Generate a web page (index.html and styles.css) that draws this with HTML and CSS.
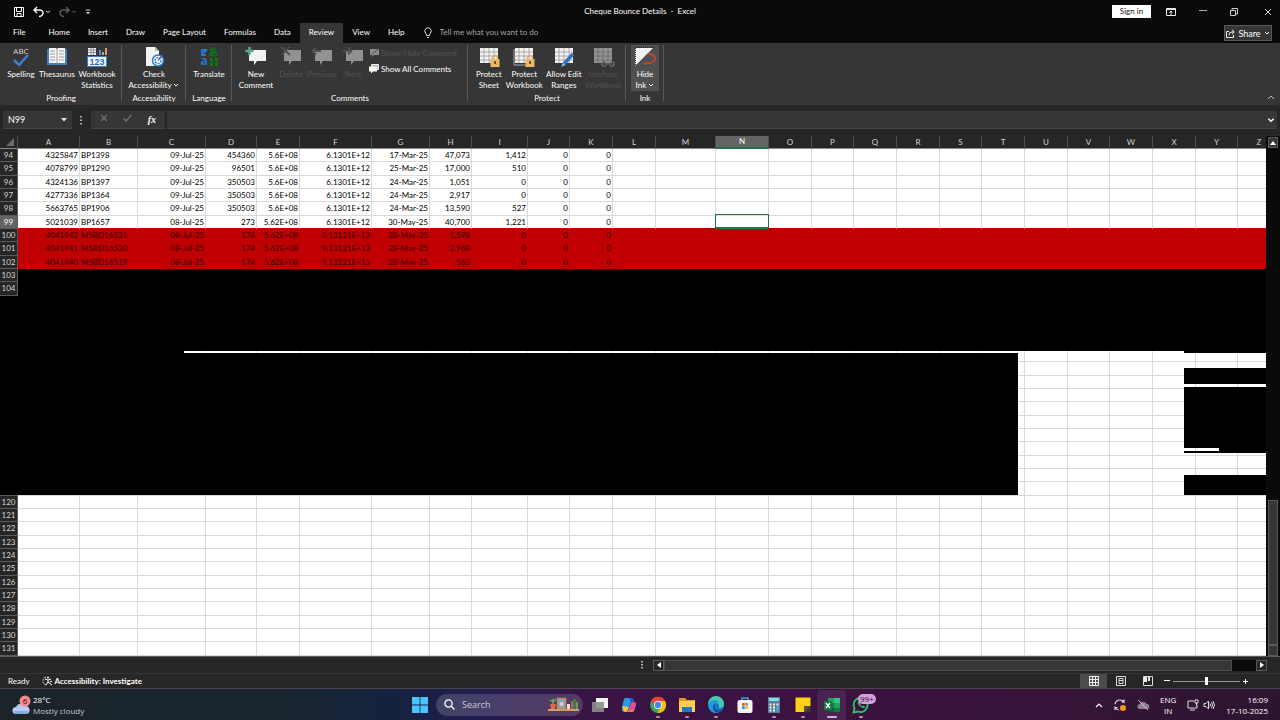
FILE: index.html
```html
<!DOCTYPE html>
<html lang="en">
<head>
    <meta charset="UTF-8">
    <title>Cheque Bounce Details - Excel</title>
    <link rel="stylesheet" href="styles.css">
</head>
<body>
<svg class="defs" width="0" height="0">
    <symbol id="chev" viewBox="0 0 6 6"><path d="M1 2l2 2 2-2" fill="none" stroke="currentColor"/></symbol>
    <symbol id="bubble" viewBox="0 0 22 22"><path d="M4 4h17v11h-9l-3 4v-4H4z" fill="currentColor"/></symbol>
    <symbol id="sheet" viewBox="0 0 22 22">
        <path d="M2 2h18v15H2z" fill="#f2f2f2"/>
        <path d="M2 6h18M2 10h18M2 14h18M6 2v15M11 2v15M16 2v15" stroke="#9a9a9a" stroke-width=".8"/>
    </symbol>
    <symbol id="lock" viewBox="0 0 22 22">
        <path d="M14.500 14v-2a2.500 2.500 0 0 1 5 0v2" fill="none" stroke="#e0b060" stroke-width="1.500"/>
        <path d="M12.500 13h9v8h-9z" fill="#e8b866"/><path d="M17 15v3" stroke="#4a3510" stroke-width="1.500"/>
    </symbol>
</svg>

<header class="titleBar">
    <div class="quick">
        <button aria-label="Save"><svg width="10" height="10" viewBox="0 0 10 10"><path d="M.5.5h9v9h-9zM2.500.5v4h5v-4M3 9.500v-3h4v3" fill="none" stroke="#fff"/></svg></button>
        <button aria-label="Undo"><svg width="17" height="12" viewBox="0 0 17 12"><path d="M4 1L1 4l3 3M1 4h5q4 0 4 3t-4 3.500" fill="none" stroke="#fff" stroke-width="1.400"/><path d="M13 5l2 1.500L17 5" fill="none" stroke="#ddd"/></svg></button>
        <button aria-label="Redo"><svg width="17" height="12" viewBox="0 0 17 12"><path d="M7 1l3 3-3 3M10 4H5Q1 4 1 7t4 3.500" fill="none" stroke="#5c5c5c" stroke-width="1.400"/><path d="M13 5l2 1.500L17 5" fill="none" stroke="#5c5c5c"/></svg></button>
        <button aria-label="Customize"><svg width="6" height="8" viewBox="0 0 6 8"><path d="M1 2h4" stroke="#ccc"/><path d="M1 4h4L3 6.500z" fill="#ccc"/></svg></button>
    </div>
    <div class="docName">Cheque Bounce Details&nbsp; -&nbsp; Excel</div>
    <div class="winBtns">
        <button class="signIn">Sign in</button>
        <button aria-label="Ribbon display"><svg width="10" height="8" viewBox="0 0 10 8"><path d="M.5.5h9v7h-9zM0 1.500h10M5 7V3M3.500 4.500L5 3l1.500 1.500" fill="none" stroke="#eee"/></svg></button>
        <button aria-label="Minimize"><svg width="8" height="8" viewBox="0 0 8 8"><path d="M0 2.500h8" stroke="#aaa"/></svg></button>
        <button aria-label="Restore"><svg width="8" height="8" viewBox="0 0 8 8"><path d="M.5 2.500h5v5h-5zM2 2V.5h5.500V6H6" fill="none" stroke="#ccc"/></svg></button>
        <button aria-label="Close"><svg width="8" height="8" viewBox="0 0 8 8"><path d="M1 1l6 6M7 1L1 7" stroke="#ddd"/></svg></button>
    </div>
</header>

<nav class="tabs">
    <button>File</button>
    <button>Home</button>
    <button>Insert</button>
    <button>Draw</button>
    <button>Page Layout</button>
    <button>Formulas</button>
    <button>Data</button>
    <button class="active">Review</button>
    <button>View</button>
    <button>Help</button>
    <label class="tellMe">
        <svg width="8" height="12" viewBox="0 0 8 12"><path d="M2.500 8.500Q2.500 7 1.500 6A3.200 3.200 0 1 1 6.500 6Q5.500 7 5.500 8.500zM3 10.500h2" fill="none" stroke="#ddd"/></svg>
        <input type="text" placeholder="Tell me what you want to do">
    </label>
    <button class="share"><svg width="9" height="9" viewBox="0 0 9 9"><path d="M3 2.500H.5v6h7V6M3 6q0-3 3-3h2M6 .8L8.300 3 6 5.200" fill="none" stroke="#eee"/></svg>Share<svg width="6" height="6"><use href="#chev"/></svg></button>
</nav>

<div class="ribbon">
    <section class="group proofing">
        <div class="tools">
            <button class="tool w34"><svg width="22" height="22" viewBox="0 0 22 22"><text x="11" y="8" class="abc">ABC</text><path d="M4 14l5 5 9-10" fill="none" stroke="#3e7fd0" stroke-width="2.500"/></svg>Spelling</button>
            <button class="tool w36"><svg width="22" height="22" viewBox="0 0 22 22"><path d="M1 3h20v16H1z" fill="#3d7fc4"/><path d="M3 2h7l1 1 1-1h7v15H3z" fill="#f4f4f4"/><path d="M11 3v15M4 5h5M4 8h5M4 11h5M4 14h5M13 5h5M13 8h5M13 11h5M13 14h5" stroke="#8a8a8a" stroke-width=".8"/></svg>Thesaurus</button>
            <button class="tool w42"><svg width="22" height="22" viewBox="0 0 22 22"><path d="M2 2h8v7H2z" fill="#eee"/><path d="M2 4h8M2 6.500h8M5 2v7M7.500 2v7" stroke="#777" stroke-width=".7"/><path d="M14 4v5" stroke="#4d8fe0" stroke-width="2"/><path d="M17 6v3M20 2v7" stroke="#d0a070" stroke-width="2"/><path d="M1.500 10.500h19v10h-19z" fill="#f4f8ff" stroke="#3d7fc4"/><text x="11" y="19" class="num">123</text></svg>Workbook<br>Statistics</button>
        </div>
        <h2>Proofing</h2>
    </section>
    <section class="group access">
        <div class="tools">
            <button class="tool w56"><svg width="22" height="22" viewBox="0 0 22 22"><path d="M3 1h9l4 4v15H3z" fill="#f2f2f2"/><path d="M12 1v4h4" fill="#bbb"/><circle cx="15" cy="14.500" r="5.500" fill="#fff" stroke="#3378c5" stroke-width="1.500"/><circle cx="15" cy="14.500" r="3" fill="none" stroke="#3378c5" stroke-width="1.500" stroke-dasharray="2 1"/><path d="M15 14.500l4-5" stroke="#3378c5" stroke-width="1.500"/></svg>Check<br>Accessibility <svg width="6" height="6"><use href="#chev"/></svg></button>
        </div>
        <h2>Accessibility</h2>
    </section>
    <section class="group lang">
        <div class="tools">
            <button class="tool w36"><svg width="22" height="22" viewBox="0 0 22 22"><path d="M3 4h6M4 3v6h4M4 8l5-4" stroke="#2376c8" stroke-width="2" fill="none"/><text x="6" y="19" class="latin">a</text><text x="15" y="10" class="kana">あ</text><path d="M12 12h3v3h-3zM17 12h3v3h-3zM12 17h3v3h-3zM17 17h3v3h-3z" fill="#0a7a14"/><path d="M12 16h8" stroke="#0a7a14"/></svg>Translate</button>
        </div>
        <h2>Language</h2>
    </section>
    <section class="group comments">
        <div class="tools">
            <button class="tool w42"><svg width="22" height="22" viewBox="0 0 22 22" color="#f2f2f2"><use href="#bubble"/><path d="M4.500 1v8M.5 5h8" stroke="#5fa58c" stroke-width="2.500"/></svg>New<br>Comment</button>
            <button class="tool w28" disabled><svg width="22" height="22" viewBox="0 0 22 22" color="#929292"><use href="#bubble"/><path d="M1 1l9 8M9 1L2 9" stroke="#505050" stroke-width="1.800"/></svg>Delete</button>
            <button class="tool w34" disabled><svg width="22" height="22" viewBox="0 0 22 22" color="#929292"><use href="#bubble"/><path d="M10 5H2M5 1.500L1.500 5 5 8.500" fill="none" stroke="#505050" stroke-width="1.800"/></svg>Previous</button>
            <button class="tool w28" disabled><svg width="22" height="22" viewBox="0 0 22 22" color="#929292"><use href="#bubble"/><path d="M1 5h8M6 1.500L9.500 5 6 8.500" fill="none" stroke="#505050" stroke-width="1.800"/></svg>Next</button>
            <div class="lines">
                <button disabled><svg width="10" height="10" viewBox="0 0 10 10"><path d="M1 1h9v6H5L3 9V7H1z" fill="#8d8d8d"/><path d="M1 8l8-7" stroke="#444"/></svg>Show/Hide Comment</button>
                <button><svg width="10" height="10" viewBox="0 0 10 10"><path d="M2.500.5h7v5h-7z" fill="#bbb" stroke="#eee"/><path d="M0 2.500h8v5H4l-2 2v-2H0z" fill="#f4f4f4"/></svg>Show All Comments</button>
            </div>
        </div>
        <h2>Comments</h2>
    </section>
    <section class="group protect">
        <div class="tools">
            <button class="tool w34"><svg width="22" height="22" viewBox="0 0 22 22"><use href="#sheet"/><use href="#lock"/></svg>Protect<br>Sheet</button>
            <button class="tool w36"><svg width="22" height="22" viewBox="0 0 22 22"><path d="M1 3v16h17" fill="none" stroke="#aaa"/><use href="#sheet"/><use href="#lock"/></svg>Protect<br>Workbook</button>
            <button class="tool w42"><svg width="22" height="22" viewBox="0 0 22 22"><use href="#sheet"/><path d="M20 8L10 19" stroke="#2f73bd" stroke-width="3.500"/><path d="M10 17l-2 4 4-2z" fill="#9dc3ea"/></svg>Allow Edit<br>Ranges</button>
            <button class="tool w36" disabled><svg width="22" height="22" viewBox="0 0 22 22"><g opacity=".5"><use href="#sheet"/></g><path d="M10 18q0-2 2-2h2M18 16h2q2 0 2 2t-2 2h-2M14 20h-2q-2 0-2-2M13 18h6" fill="none" stroke="#6a6a6a" stroke-width="1.500"/></svg>Unshare<br>Workbook</button>
        </div>
        <h2>Protect</h2>
    </section>
    <section class="group ink">
        <div class="tools">
            <button class="tool w28 pressed"><svg width="22" height="22" viewBox="0 0 22 22"><path d="M14 8q7 0 7 4.500 0 5-11 5" fill="none" stroke="#c0472f" stroke-width="1.800"/><path d="M1 2h18L1 20z" fill="#f4f4f4"/><path d="M1 1.500h19M1.500 2v18" stroke="#222" stroke-dasharray="1 1"/></svg>Hide<br>Ink <svg width="6" height="6"><use href="#chev"/></svg></button>
        </div>
        <h2>Ink</h2>
    </section>
    <button class="collapse" aria-label="Collapse ribbon"><svg width="8" height="6" viewBox="0 0 8 6"><path d="M1 5l3-3 3 3" fill="none" stroke="#bbb"/></svg></button>
</div>

<div class="formulaBar">
    <div class="nameBox">
        <input type="text" value="N99" aria-label="Name box">
        <svg width="6" height="4" viewBox="0 0 6 4"><path d="M0 0h6L3 3.500z" fill="#e6e6e6"/></svg>
    </div>
    <svg class="dots" width="2" height="10" viewBox="0 0 2 10"><path d="M1 1v9" stroke="#ddd" stroke-width="1.500" stroke-dasharray="1.500 2"/></svg>
    <div class="fxBtns">
        <button aria-label="Cancel"><svg width="8" height="8" viewBox="0 0 8 8"><path d="M1 1l6 6M7 1L1 7" stroke="#6e6e6e" stroke-width="1.300"/></svg></button>
        <button aria-label="Enter"><svg width="9" height="8" viewBox="0 0 9 8"><path d="M.5 4.500l2.500 2.500 5.500-6" fill="none" stroke="#6e6e6e" stroke-width="1.500"/></svg></button>
        <button class="fx">fx</button>
    </div>
    <div class="formula">
        <input type="text" aria-label="Formula">
        <svg width="8" height="8" viewBox="0 0 6 6"><path d="M1 2l2 2 2-2" fill="none" stroke="#fff"/></svg>
    </div>
</div>

<main class="sheet">
    <div class="cells">
        <table id="grid"></table>
        <!-- blacked out areas -->
        <div class="mask m1"></div>
        <div class="mask m2"></div>
        <div class="mask m3"></div>
        <div class="mask m4"></div>
        <div class="mask m5"></div>
        <div class="mask m6"></div>
        <div class="mask m7"></div>
        <div class="mask m8"></div>
        <div class="mask m9"></div>
        <div class="mask m10"></div>
    </div>
    <div class="vScroll">
        <button aria-label="Scroll up"><svg width="6" height="4" viewBox="0 0 6 4"><path d="M0 4h6L3 0z" fill="#fff"/></svg></button>
        <div class="vThumb"></div>
        <button aria-label="Scroll down"></button>
    </div>
</main>

<div class="hScroll">
    <svg width="2" height="8" viewBox="0 0 2 8"><path d="M1 0v8" stroke="#ddd" stroke-width="1.500" stroke-dasharray="1.500 1.500"/></svg>
    <div class="track">
        <button aria-label="Scroll left"><svg width="4" height="6" viewBox="0 0 4 6"><path d="M4 0v6L0 3z" fill="#fff"/></svg></button>
        <div class="hThumb"></div>
        <button aria-label="Scroll right"><svg width="4" height="6" viewBox="0 0 4 6"><path d="M0 0v6l4-3z" fill="#fff"/></svg></button>
    </div>
</div>

<div class="status">
    <span>Ready</span>
    <svg width="11" height="10" viewBox="0 0 11 10"><path d="M4 1Q1 2 1 5q0 3 3 4" fill="none" stroke="#ddd" stroke-dasharray="2 1"/><path d="M3 3l3 1 3-1M6 4v2L4 9M6 6l4 3M8 6l2-1" fill="none" stroke="#fff"/><circle cx="6" cy="1.500" r="1" fill="#fff"/></svg>
    <b>Accessibility: Investigate</b>
    <div class="views">
        <button class="on" aria-label="Normal"><svg width="10" height="10" viewBox="0 0 10 10"><path d="M.5.5h9v9h-9zM.5 3.500h9M.5 6.500h9M3.500.5v9M6.500.5v9" fill="none" stroke="#eee"/></svg></button>
        <button aria-label="Page layout"><svg width="10" height="10" viewBox="0 0 10 10"><path d="M.5.5h9v9h-9zM3 2.500h4v5H3zM3 4.500h4" fill="none" stroke="#ddd"/></svg></button>
        <button aria-label="Page break"><svg width="10" height="10" viewBox="0 0 10 10"><path d="M.5.5h9v9h-9z" fill="none" stroke="#ddd"/><path d="M1 1h3v5H1zM5 1h2v4H5z" fill="#eee"/></svg></button>
    </div>
    <div class="zoom">
        <button aria-label="Zoom out"><svg width="6" height="6" viewBox="0 0 6 6"><path d="M0 2.500h6" stroke="#fff"/></svg></button>
        <input type="range" aria-label="Zoom" min="0" max="100" value="50">
        <button aria-label="Zoom in"><svg width="5" height="5" viewBox="0 0 5 5"><path d="M0 2.500h5M2.500 0v5" stroke="#fff"/></svg></button>
    </div>
</div>

<footer class="taskbar">
    <div class="weather">
        <svg width="20" height="22" viewBox="0 0 20 22"><path d="M4 20a3.500 3.500 0 0 1 0-7 5 5 0 0 1 9-1 4 4 0 0 1 1 8z" fill="#b5cdf5"/><path d="M2 17h14q0 3-3 3H4q-2 0-2-3z" fill="#86a9e0"/><circle cx="13" cy="7" r="5.500" fill="#f58a8e"/><text x="13" y="10" class="badge">6</text></svg>
        <div>28°C<br><span>Mostly cloudy</span></div>
    </div>
    <div class="apps">
        <button class="app" aria-label="Start"><svg width="16" height="16" viewBox="0 0 16 16"><path d="M0 0h7.600v7.600H0zM8.400 0H16v7.600H8.400zM0 8.400h7.600V16H0zM8.400 8.400H16V16H8.400z" fill="#4cc2ff"/></svg></button>
        <label class="search">
            <svg width="11" height="11" viewBox="0 0 11 11"><circle cx="4.500" cy="4.500" r="3.600" fill="none" stroke="#fff" stroke-width="1.300"/><path d="M7 7l3.500 3.500" stroke="#fff" stroke-width="1.300"/></svg>
            <input type="text" placeholder="Search">
            <svg width="32" height="16" viewBox="0 0 32 16"><path d="M0 12h31v2H0z" fill="#d59c6a"/><path d="M2 7h6l-1 5H3z" fill="#d9694a"/><path d="M5 7V2M5 5L2 3M5 5l3-3" stroke="#5fae5a" stroke-width="1.500"/><path d="M9.500 1.500h8v10h-8z" fill="#7aa6c9" stroke="#c98a55" stroke-width="1.500"/><circle cx="13.500" cy="7" r="2" fill="#eed0b0"/><path d="M19 7h3v5h-3z" fill="#e9e1dc"/><path d="M23 4h2v8h-2z" fill="#c65b4b"/><path d="M25 2h3v10h-3z" fill="#3f7a55"/><path d="M28 5h2v7h-2z" fill="#6d9a68"/></svg>
        </label>
        <button class="app" aria-label="Task view"><svg width="18" height="18" viewBox="0 0 18 18"><path d="M5 2h12v10H5z" fill="#f3f3f3"/><path d="M1 6h12v10H1z" fill="#8d8d8d" opacity=".9"/></svg></button>
        <button class="app" aria-label="Copilot"><svg width="18" height="18" viewBox="0 0 18 18"><path d="M5 2h6q2 0 2.500 2l.5 2h-3L8 14q-.6 2-3 2-4 0-3-4l1.500-7Q4 2 5 2z" fill="#2a9be8"/><path d="M2 10l1.500 4q.5 2 2 2 2 0 2.500-2l.8-3z" fill="#f4c431"/><path d="M13 6q4 0 3 3l-1.500 5q-.6 2-3 2H6q2 0 2.500-2L10.500 8q.5-2 2.500-2z" fill="#d8529a"/><path d="M9 14l5.500 0q-.6 2-3 2H6q2 0 3-2z" fill="#f2803c"/><path d="M11 2q2 0 2.500 2l.5 2h-3L9.500 3z" fill="#2453c9"/></svg></button>
        <button class="app run" aria-label="Chrome"><svg width="18" height="18" viewBox="0 0 18 18"><circle cx="9" cy="9" r="8" fill="#34a853"/><path d="M2 5a8 8 0 0 1 14 0H9L6 11z" fill="#ea4335"/><path d="M16 5a8 8 0 0 1-7.500 12l4-7L9 5z" fill="#fbbc05"/><circle cx="9" cy="9" r="4" fill="#fff"/><circle cx="9" cy="9" r="3.200" fill="#4285f4"/></svg></button>
        <button class="app run" aria-label="File Explorer"><svg width="18" height="18" viewBox="0 0 18 18"><path d="M1 2h6l2 2h8v4H1z" fill="#e09c1f"/><path d="M1 5h16v11H1z" fill="#ffd050"/><path d="M4 11h10v5H4z" fill="#2279c9"/></svg></button>
        <button class="app run" aria-label="Edge"><svg width="18" height="18" viewBox="0 0 18 18"><circle cx="9" cy="9" r="8" fill="#1479cf"/><path d="M1 8a8 8 0 0 1 16 0q0 4-5 4 1-5-4-5-4 0-7 1z" fill="#43cbb0"/><path d="M1 8q2-4 7-4 3 0 4 3Q6 6 6 11q0 4 4 6Q2 17 1 8z" fill="#1b9de0"/><path d="M8 8q-2 5 3 6 3 .5 5-1-3 4-7 3-4-2-3-6 1-2 2-2z" fill="#124d97"/></svg></button>
        <button class="app" aria-label="Store"><svg width="18" height="18" viewBox="0 0 18 18"><path d="M6 5V2h6v3" fill="none" stroke="#3a9be5" stroke-width="1.500"/><rect x="1.500" y="4" width="15" height="13" rx="2" fill="#f5f5f5"/><path d="M6 7h2.700v2.700H6z" fill="#e4572e"/><path d="M9.300 7H12v2.700H9.300z" fill="#76b041"/><path d="M6 10.300h2.700V13H6z" fill="#2d8fe0"/><path d="M9.300 10.300H12V13H9.300z" fill="#f5b921"/></svg></button>
        <button class="app run" aria-label="Calculator"><svg width="18" height="18" viewBox="0 0 18 18"><path d="M3 1h12v16H3z" fill="#5d7c94"/><path d="M4 2h10v3H4z" fill="#7fdcf5"/><path d="M4.500 7.500h2v2h-2zM8 7.500h2v2H8zM4.500 10.500h2v2h-2zM8 10.500h2v2H8zM4.500 13.500h2v2h-2zM8 13.500h2v2H8z" fill="#eee"/><path d="M11.500 7.500h2v2h-2z" fill="#eee"/><path d="M11.500 10.500h2v5h-2z" fill="#3fb3ef"/></svg></button>
        <button class="app run" aria-label="Sticky Notes"><svg width="18" height="18" viewBox="0 0 18 18"><path d="M1.500 1.500h15V10l-6 6h-9z" fill="#fcd116"/><path d="M10 16.500V10h6.500v6.500z" fill="#3b3b35"/><path d="M10 16.500V10h6.500z" fill="#55533f"/></svg></button>
        <button class="app run current" aria-label="Excel"><svg width="18" height="18" viewBox="0 0 18 18"><path d="M5 2h12v14H5z" fill="#21a366"/><path d="M11 2h6v5h-6z" fill="#33c481"/><path d="M5 7h6v5H5zM11 12h6v4h-6z" fill="#107c41"/><path d="M5 12h6v4H5z" fill="#185c37"/><path d="M1 5h8v9H1z" fill="#107c41"/><path d="M3 7l4 5M7 7l-4 5" stroke="#fff" stroke-width="1.300"/></svg></button>
        <button class="app run" aria-label="WhatsApp"><svg width="18" height="18" viewBox="0 0 18 18"><path d="M1.500 16.500l1-4A7 7 0 1 1 6 15.500z" fill="none" stroke="#2bc466" stroke-width="1.800"/><path d="M6 5.500q-1 2 1.500 4.500t5 2l.5-1.500-2-1-1 .8q-1.500-.6-2-2l.7-1-.8-1.800z" fill="#2bc466"/></svg><span class="count">99+</span></button>
    </div>
    <div class="tray">
        <svg width="8" height="6" viewBox="0 0 8 6"><path d="M1 5l3-3 3 3" fill="none" stroke="#fff" stroke-width="1.200"/></svg>
        <svg width="12" height="12" viewBox="0 0 12 12"><path d="M1 5q1-4 5-4 2.500 0 4 2V.5M10 3H7.500M1 11V8.500q1.500 2 4 2.500M1 8.500h2.500" fill="none" stroke="#ddd" stroke-width="1.200"/><circle cx="9" cy="9" r="3" fill="#f7941d"/></svg>
        <svg width="12" height="10" viewBox="0 0 12 10"><path d="M3 9a2.500 2.500 0 0 1 0-5 3.500 3.500 0 0 1 6.500 0A2.500 2.500 0 0 1 10 9z" fill="#8f8093"/><path d="M1 0l10 10" stroke="#c9bccb"/></svg>
        <span class="kb">ENG<br>IN</span>
        <svg class="net" width="12" height="12" viewBox="0 0 12 12"><path d="M7 2H1v7h9V6M3 11h5M8 1h3v3H8zM9.500 4v3" fill="none" stroke="#ddd"/></svg>
        <svg width="12" height="10" viewBox="0 0 12 10"><path d="M1 3.500h2L5.500 1v8L3 6.500H1zM7 3.500q1 1.500 0 3M8.500 2q2 3 0 6M10 1q3 4 0 8" fill="none" stroke="#ddd"/></svg>
        <span class="clock">16:09<br>17-10-2025</span>
    </div>
</footer>
<script src="script.js"></script>
</body>
</html>
```
FILE: styles.css
```css
*{
    padding: 0;
    margin: 0;
    box-sizing: border-box;
}
body{
    min-height: 100vh;
    display: flex;
    flex-direction: column;
    background-color: #262626;
    color: #fff;
    font: 8px/11px Lato, "Noto Sans", sans-serif;
    overflow: hidden;
}
button, input{
    background: none;
    border: none;
    outline: none;
    color: inherit;
    font: inherit;
}
svg{
    flex: none;
    overflow: visible;
}
.defs{
    position: absolute;
}
.titleBar{
    display: grid;
    grid-template-columns: 1fr auto 1fr;
    align-items: center;
    height: 23px;
    background-color: #0a0a0a;
}
.quick, .winBtns, .winBtns button, .quick button{
    display: flex;
    align-items: center;
}
.quick{
    gap: 9px;
    padding-left: 14px;
}
.winBtns{
    justify-content: flex-end;
    gap: 23px;
    padding-right: 8px;
}
.winBtns button:last-child{
    margin-left: 3px;
}
.winBtns .signIn{
    justify-content: center;
    width: 39px;
    height: 13px;
    margin-right: -8px;
    background-color: #fff;
    color: #111;
}
.tabs{
    display: flex;
    height: 20px;
    padding-left: 4px;
    background-color: #0a0a0a;
}
.tabs button{
    padding: 0 9px 2px;
}
.tabs button:first-child{
    margin-right: 5px;
}
.tabs .active{
    background-color: #363636;
}
.tellMe{
    display: flex;
    align-items: center;
    gap: 8px;
    margin-left: 10px;
    padding-bottom: 1px;
}
.tellMe input{
    width: 140px;
}
.tellMe input::placeholder{
    color: #a5a5a5;
}
.tabs .share{
    display: flex;
    align-items: center;
    justify-content: center;
    gap: 3px;
    width: 48px;
    height: 16px;
    margin: 2px 8px 0 auto;
    padding: 0;
    background-color: #363636;
    border: 1px solid #5a5a5a;
    font-size: 9px;
}
.ribbon{
    display: flex;
    height: 62px;
    background-color: #363636;
}
.group{
    position: relative;
    display: flex;
    flex-direction: column;
    justify-content: space-between;
    padding: 2px 4px 1px;
}
.group:after{
    content: "";
    position: absolute;
    right: 0;
    top: 2px;
    bottom: 4px;
    width: 1px;
    background-color: #5a5a5a;
}
.group h2{
    font: inherit;
    text-align: center;
}
.tools{
    display: flex;
    align-items: flex-start;
    justify-content: center;
}
.proofing{
    width: 122px;
}
.access{
    width: 64px;
}
.lang{
    width: 46px;
}
.comments{
    width: 236px;
    padding: 2px 3px 1px;
}
.protect{
    width: 158px;
}
.ink{
    width: 38px;
}
.tool{
    display: block;
    white-space: nowrap;
    text-align: center;
}
.tool > svg:first-child{
    display: block;
    margin: 1px auto;
}
.w28{
    width: 28px;
}
.w34{
    width: 34px;
}
.w36{
    width: 38px;
}
.w42{
    width: 42px;
}
.w56{
    width: 56px;
}
.pressed{
    background-color: #505050;
}
.ribbon button:disabled{
    color: #525252;
}
.lines{
    flex: 1;
    margin-left: 2px;
}
.lines button{
    display: flex;
    align-items: center;
    gap: 2px;
    height: 16px;
    white-space: nowrap;
}
.abc{
    font: 8px "Open Sans", sans-serif;
    fill: #ddd;
    text-anchor: middle;
}
.num{
    font: bold 9px "Liberation Sans", sans-serif;
    fill: #2c6db5;
    text-anchor: middle;
}
.latin{
    font: bold 12px/12px "Open Sans", sans-serif;
    fill: #2376c8;
    text-anchor: middle;
}
.kana{
    font: bold 10px/10px "Noto Sans CJK JP", sans-serif;
    fill: #0a7a14;
    text-anchor: middle;
}
.collapse{
    margin: auto 5px 2px auto;
}
.formulaBar{
    display: flex;
    align-items: center;
    height: 31px;
    padding: 6px 3px 7px;
}
.nameBox, .fxBtns, .formula{
    display: flex;
    align-items: center;
    height: 18px;
    background-color: #363636;
    border-bottom: 1px solid #444;
}
.nameBox{
    width: 69px;
    padding: 0 5px;
    font-size: 9px;
}
.nameBox input{
    flex: 1;
    min-width: 0;
}
.dots{
    margin: 0 9px 0 8px;
}
.fxBtns{
    justify-content: space-between;
    width: 74px;
    padding: 0 9px;
}
.fx{
    font: italic bold 10px "Liberation Serif", serif;
}
.formula{
    flex: 1;
    margin-left: 2px;
    padding-right: 2px;
}
.formula input{
    flex: 1;
}
.sheet{
    display: flex;
}
.cells{
    position: relative;
    flex: 1;
    min-width: 0;
    overflow: hidden;
    background-color: #fff;
}
table{
    table-layout: fixed;
    width: 1281px;
    border-spacing: 0;
    font: 8px/11px Lato, sans-serif;
    color: #000;
}
tr{
    height: 13px;
}
tbody tr:nth-child(3n+2){
    height: 14px;
}
td{
    border-right: 1px solid #d9d9d9;
    border-bottom: 1px solid #d9d9d9;
    padding: 0 1px;
    text-align: right;
    white-space: nowrap;
}
td.left{
    text-align: left;
}
th{
    background-color: #262626;
    border-right: 1px solid #4c4c4c;
    border-bottom: 1px solid #8a8a8a;
    color: #d4d4d4;
    font-weight: normal;
}
tbody th{
    border-color: #5a5a5a;
}
.corner{
    position: relative;
}
.corner:after{
    content: "";
    position: absolute;
    right: 3px;
    bottom: 2px;
    border: 4px solid;
    border-color: transparent #6a6a6a #6a6a6a transparent;
}
th.picked{
    background-color: #646464;
    color: #fff;
}
thead .picked{
    border-bottom: 2px solid #217346;
}
.red td{
    background-color: #c00000;
    border-color: #c00000;
    color: #300000;
}
tr:has(+ .red) td{
    border-bottom-color: #c00000;
}
.cursor{
    position: relative;
}
.cursor:after{
    content: "";
    position: absolute;
    inset: -2px -1px -1px -1px;
    border: 1px solid #217346;
    border-bottom-width: 2px;
}
.mask{
    position: absolute;
    right: 0;
    background-color: #000;
}
.m1{
    left: 18px;
    top: 133px;
    height: 82px;
}
.m2{
    left: 0;
    width: 18px;
    top: 160px;
    height: 199px;
}
.m3{
    left: 18px;
    width: 166px;
    top: 215px;
    height: 2px;
}
.m4{
    left: 18px;
    width: 1000px;
    top: 217px;
    height: 142px;
}
.m5, .m6, .m7, .m8, .m9, .m10{
    left: 1184px;
}
.m5{
    top: 215px;
    height: 2px;
}
.m6{
    top: 232px;
    height: 16px;
}
.m7{
    top: 251px;
    height: 61px;
}
.m8{
    left: 1219px;
    top: 312px;
    height: 3px;
}
.m9{
    top: 315px;
    height: 2px;
}
.m10{
    top: 339px;
    height: 20px;
}
.vScroll{
    display: flex;
    flex-direction: column;
    width: 14px;
    padding: 1px 2px 0;
    background-color: #0a0a0a;
}
.vScroll button{
    display: flex;
    align-items: center;
    justify-content: center;
    height: 11px;
    background-color: #363636;
    border: 1px solid #5a5a5a;
}
.vThumb{
    height: 145px;
    margin-top: auto;
    background-color: #363636;
    border: 1px solid #5a5a5a;
}
.hScroll{
    display: flex;
    align-items: center;
    height: 18px;
    padding: 0 13px 0 50%;
    border-top: 1px solid #5a5a5a;
    border-bottom: 1px solid #363636;
}
.hScroll > svg{
    margin-left: 1px;
}
.track{
    display: flex;
    flex: 1;
    height: 11px;
    margin-left: 10px;
    background-color: #0a0a0a;
}
.track button{
    display: flex;
    align-items: center;
    justify-content: center;
    width: 11px;
    background-color: #262626;
    border: 1px solid #5a5a5a;
}
.hThumb{
    flex: 1;
    margin-right: 24px;
    background-color: #363636;
    border: 1px solid #4c4c4c;
}
.status{
    display: flex;
    align-items: center;
    height: 14px;
    padding: 0 32px 0 8px;
}
.status > svg{
    margin: 0 2px 0 12px;
}
.views{
    display: flex;
    align-self: stretch;
    margin-left: auto;
}
.views button{
    display: flex;
    align-items: center;
    justify-content: center;
    width: 27px;
}
.views .on{
    background-color: #4c4c4c;
}
.zoom, .zoom button{
    display: flex;
    align-items: center;
}
.zoom{
    gap: 3px;
    margin-left: 3px;
}
.zoom input{
    appearance: none;
    width: 67px;
    height: 9px;
    background: linear-gradient(#999, #999) center / 100% 1px no-repeat;
}
.zoom input::-webkit-slider-thumb{
    appearance: none;
    width: 3px;
    height: 8px;
    background-color: #fff;
}
.taskbar{
    display: grid;
    grid-template-columns: 1fr auto 1fr;
    height: 32px;
    border-top: 1px solid #4a4450;
    font-family: "Open Sans", "Noto Sans", sans-serif;
    background: linear-gradient(90deg, #1b2429 0%, #1a2530 22%, #15223f 31%, #231c50 38%, #381444 46%, #3b1240 62%, #351438 84%, #2d1530 100%);
}
.weather{
    display: flex;
    align-items: center;
    gap: 1px;
    padding-left: 12px;
}
.weather span{
    color: #c4c8ca;
}
.badge{
    font: 8px "Open Sans", sans-serif;
    fill: #301010;
    text-anchor: middle;
}
.apps{
    display: flex;
    align-items: center;
}
.app{
    position: relative;
    display: flex;
    align-items: center;
    justify-content: center;
    width: 29px;
    height: 30px;
}
.run:after{
    content: "";
    position: absolute;
    bottom: 2px;
    left: 13px;
    width: 4px;
    height: 2px;
    border-radius: 1px;
    background-color: #a994ad;
}
.current{
    background-color: #4a2450;
    border-radius: 3px;
}
.current:after{
    left: 10px;
    width: 10px;
    background-color: #e3a8ea;
}
.count{
    position: absolute;
    left: 12px;
    top: 4px;
    padding: 0 2px;
    border-radius: 5px;
    line-height: 10px;
    background-color: #d9a0e0;
    color: #201020;
}
.search{
    display: flex;
    align-items: center;
    gap: 7px;
    width: 147px;
    height: 22px;
    margin: 0 2px;
    padding: 0 3px 0 8px;
    border-radius: 11px;
    background-color: rgba(255, 255, 255, .16);
    font-size: 9px;
}
.search input{
    flex: 1;
    min-width: 0;
}
.search input::placeholder{
    color: #ccc8d4;
}
.tray{
    display: flex;
    align-items: center;
    justify-content: flex-end;
    gap: 11px;
    padding-right: 12px;
}
.tray .kb{
    text-align: center;
}
.tray .net{
    margin-right: -7px;
}
.clock{
    text-align: right;
}
```
FILE: script.js
```js
var widths = [18,62,58,68,51,43,72,58,42,56,42,43,43,60,53,43,42,43,43,42,43,43,42,43,43,42,43];
var rows = {
    94: ["4325847","BP1398","09-Jul-25","454360","5.6E+08","6.1301E+12","17-Mar-25","47,073","1,412","0","0"],
    95: ["4078799","BP1290","09-Jul-25","96501","5.6E+08","6.1301E+12","25-Mar-25","17,000","510","0","0"],
    96: ["4324136","BP1397","09-Jul-25","350503","5.6E+08","6.1301E+12","24-Mar-25","1,051","0","0","0"],
    97: ["4277336","BP1364","09-Jul-25","350503","5.6E+08","6.1301E+12","24-Mar-25","2,917","0","0","0"],
    98: ["5663765","BP1906","09-Jul-25","350503","5.6E+08","6.1301E+12","24-Mar-25","13,590","527","0","0"],
    99: ["5021039","BP1657","08-Jul-25","273","5.62E+08","6.1301E+12","30-May-25","40,700","1,221","0","0"],
    100: ["4041942","MSBD16521","08-Jul-25","174","5.62E+08","9.13121E+13","28-May-25","1,598","0","0","0"],
    101: ["4041941","MSBD16520","08-Jul-25","174","5.62E+08","9.13121E+13","28-May-25","2,968","0","0","0"],
    102: ["4041940","MSBD16519","08-Jul-25","174","5.62E+08","9.13121E+13","28-May-25","563","0","0","0"]
};
var letters = "ABCDEFGHIJKLMNOPQRSTUVWXYZ";
var html = "<colgroup>";
for(var i = 0; i < widths.length; i++){
    html += "<col style='width:" + widths[i] + "px'>";
}
html += "</colgroup><thead><tr><th class='corner'></th>";
for(var j = 0; j < letters.length; j++){
    html += (letters[j] == "N" ? "<th class='picked'>" : "<th>") + letters[j] + "</th>";
}
html += "</tr></thead><tbody>";
for(var r = 94; r <= 131; r++){
    html += r >= 100 && r <= 102 ? "<tr class='red'>" : "<tr>";
    //rows 105 - 119 have no number
    html += (r == 99 ? "<th class='picked'>" : "<th>") + (r > 104 && r < 120 ? "" : r) + "</th>";
    for(var c = 0; c < letters.length; c++){
        var cls = c == 1 ? "left" : (r == 99 && c == 13 ? "cursor" : "");
        html += "<td class='" + cls + "'>" + (rows[r] && rows[r][c] || "") + "</td>";
    }
    html += "</tr>";
}
document.getElementById("grid").innerHTML = html + "</tbody>";
```
